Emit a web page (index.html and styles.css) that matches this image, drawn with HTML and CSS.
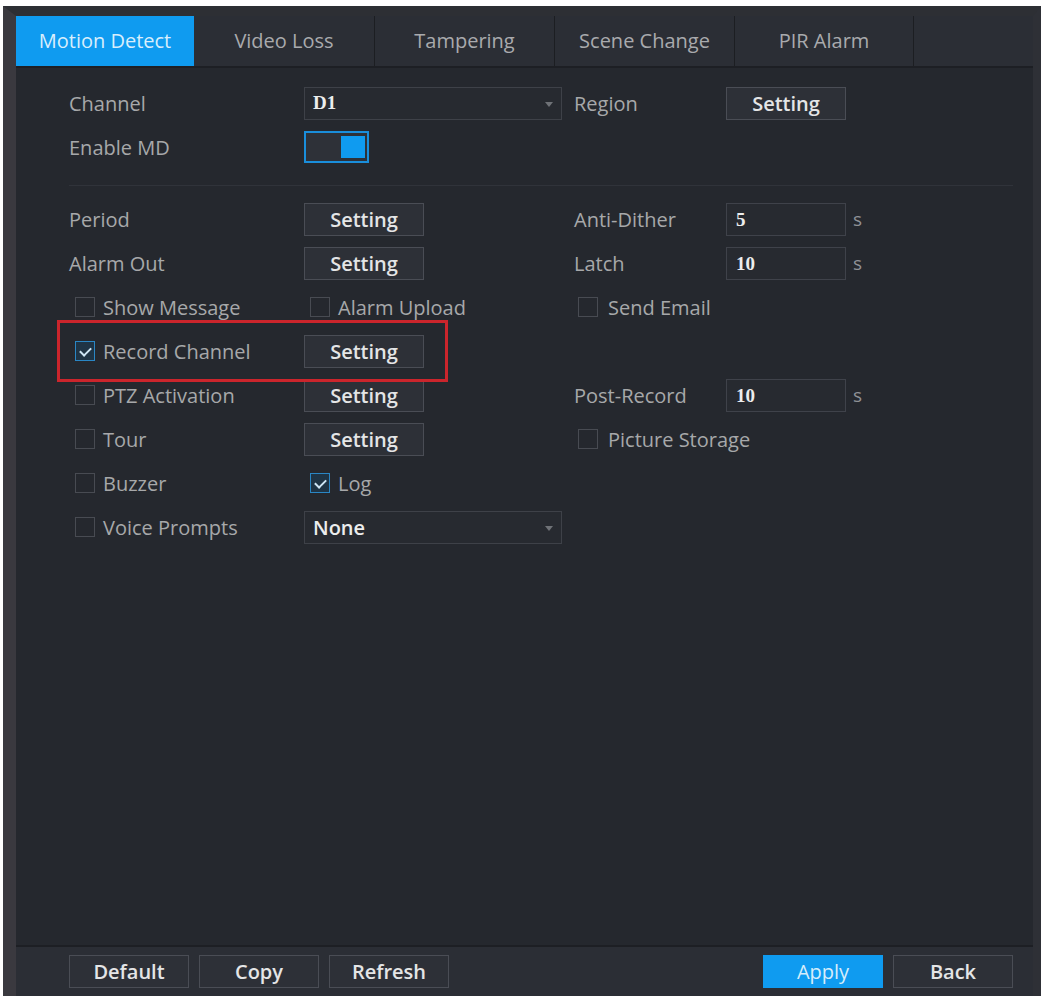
FILE: index.html
```html
<!DOCTYPE html>
<html lang="en">
<head>
    <meta charset="UTF-8">
    <title>Alarm - Motion Detect</title>
    <link rel="stylesheet" href="styles.css">
</head>
<body>
    <div class="panel">
        <div class="tabs">
            <div class="tab active">Motion Detect</div>
            <div class="tab w181">Video Loss</div>
            <div class="tab">Tampering</div>
            <div class="tab">Scene Change</div>
            <div class="tab w179">PIR Alarm</div>
            <div class="tab-rest"></div>
        </div>

        <div class="main">
            <div class="row">
                <span class="label">Channel</span>
                <div class="select wide"><span class="serif">D1</span><i class="arrow"></i></div>
                <span class="label">Region</span>
                <button class="btn">Setting</button>
            </div>
            <div class="row">
                <span class="label">Enable MD</span>
                <div class="toggle on"><span class="knob"></span></div>
            </div>

            <div class="divider"></div>

            <div class="row">
                <span class="label">Period</span>
                <button class="btn">Setting</button>
                <span class="label">Anti-Dither</span>
                <div class="unit"><div class="input serif">5</div><span>s</span></div>
            </div>
            <div class="row">
                <span class="label">Alarm Out</span>
                <button class="btn">Setting</button>
                <span class="label">Latch</span>
                <div class="unit"><div class="input serif">10</div><span>s</span></div>
            </div>
            <div class="row">
                <label class="check"><i class="box"></i>Show Message</label>
                <label class="check"><i class="box"></i>Alarm Upload</label>
                <label class="check c3"><i class="box"></i>Send Email</label>
            </div>
            <div class="row">
                <label class="check"><i class="box checked"></i>Record Channel</label>
                <button class="btn">Setting</button>
            </div>
            <div class="row">
                <label class="check"><i class="box"></i>PTZ Activation</label>
                <button class="btn">Setting</button>
                <span class="label">Post-Record</span>
                <div class="unit"><div class="input serif">10</div><span>s</span></div>
            </div>
            <div class="row">
                <label class="check"><i class="box"></i>Tour</label>
                <button class="btn">Setting</button>
                <label class="check c3"><i class="box"></i>Picture Storage</label>
            </div>
            <div class="row">
                <label class="check"><i class="box"></i>Buzzer</label>
                <label class="check"><i class="box checked"></i>Log</label>
            </div>
            <div class="row">
                <label class="check"><i class="box"></i>Voice Prompts</label>
                <div class="select wide"><span class="bold">None</span><i class="arrow"></i></div>
            </div>

            <!-- red frame around the record channel row -->
            <div class="mark"></div>
        </div>

        <div class="footer">
            <div class="group">
                <button class="btn">Default</button>
                <button class="btn">Copy</button>
                <button class="btn">Refresh</button>
            </div>
            <div class="group">
                <button class="btn primary">Apply</button>
                <button class="btn">Back</button>
            </div>
        </div>
    </div>
</body>
</html>
```

FILE: styles.css
```css
*{
    padding: 0;
    margin: 0;
    box-sizing: border-box;
}
body{
    background: #fff;
    font-family: "Open Sans", "Noto Sans", sans-serif;
    font-size: 20px;
    color: #a7a8aa;
    overflow: hidden;
}
.panel{
    width: 1038px;
    height: 1000px;
    margin: 6px 0 0 3px;
    background: #25282e;
    border-left: 13px solid #3a393f;
    border-top: 10px solid #2d2f34;
    border-right: 8px solid #2e3036;
}
/* tab bar */
.tabs{
    display: flex;
    height: 52px;
    background: #2b2e35;
    border-bottom: 2px solid #1d1f24;
}
.tab{
    width: 180px;
    line-height: 50px;
    text-align: center;
    color: #a9aaad;
    border-right: 1px solid #1c1e22;
}
.tab.w181{ width: 181px; }
.tab.w179{ width: 179px; }
.tab.active{
    width: 178px;
    background: #0f9bf0;
    color: #d8eefc;
    border-right: none;
}
.tab-rest{
    flex: 1;
}
/* form */
.main{
    position: relative;
    height: 877px;
    padding: 13px 0 0 53px;
}
.row{
    display: grid;
    grid-template-columns: 235px 270px 152px 1fr;
    align-items: center;
    height: 44px;
}
.label{
    white-space: nowrap;
}
.divider{
    height: 1px;
    margin: 16px 20px 11px 0;
    background: #30333a;
}
.btn{
    width: 120px;
    height: 33px;
    font-family: inherit;
    font-size: 20px;
    font-weight: 600;
    color: #e4e5e6;
    background: #2d3037;
    border: 1px solid #4a4d55;
}
.btn.primary{
    background: #0f9bf0;
    border-color: #0f9bf0;
    color: #d6edfb;
    font-weight: 400;
}
.select{
    position: relative;
    display: flex;
    align-items: center;
    width: 258px;
    height: 33px;
    padding-left: 8px;
    background: #272a30;
    border: 1px solid #3e4148;
    color: #eceded;
}
.arrow{
    position: absolute;
    right: 8px;
    top: 14px;
    border-left: 4px solid transparent;
    border-right: 4px solid transparent;
    border-top: 5px solid #6f7277;
}
.serif{
    font-family: "Liberation Serif", serif;
    font-weight: bold;
    font-size: 19px;
    color: #eceded;
}
.bold{
    font-weight: 600;
}
.toggle{
    position: relative;
    width: 65px;
    height: 32px;
    background: #2e3138;
    border: 2px solid #1a8edb;
}
.toggle .knob{
    position: absolute;
    right: 2px;
    top: 3px;
    width: 24px;
    height: 22px;
    background: #0f9bf0;
}
.unit{
    display: flex;
    align-items: center;
}
.input{
    width: 120px;
    height: 33px;
    padding-left: 9px;
    line-height: 31px;
    background: #272a30;
    border: 1px solid #3f424a;
}
.unit span{
    margin-left: 7px;
    color: #8f9196;
    font-size: 19px;
}
.check{
    display: flex;
    align-items: center;
    margin-left: 6px;
    white-space: nowrap;
}
.check.c3{
    margin-left: 4px;
}
.box{
    flex: none;
    position: relative;
    width: 20px;
    height: 20px;
    margin-right: 8px;
    border: 1px solid #484b52;
}
.c3 .box{
    margin-right: 10px;
}
.box.checked{
    border-color: #2a86c4;
    background: #1f3445;
}
/* tick */
.box.checked::after{
    content: "";
    position: absolute;
    left: 4px;
    top: 2px;
    width: 9px;
    height: 5px;
    border-left: 2px solid #cfe6f5;
    border-bottom: 2px solid #cfe6f5;
    transform: translate(0, 3px) rotate(-45deg);
}
.mark{
    position: absolute;
    left: 41px;
    top: 252px;
    width: 391px;
    height: 62px;
    border: 3px solid #cb252c;
}
/* footer buttons */
.footer{
    display: flex;
    justify-content: space-between;
    height: 60px;
    padding: 8px 20px 0 53px;
    background: #2b2e35;
    border-top: 2px solid #1d1f24;
}
.group{
    display: flex;
    gap: 10px;
}
```
